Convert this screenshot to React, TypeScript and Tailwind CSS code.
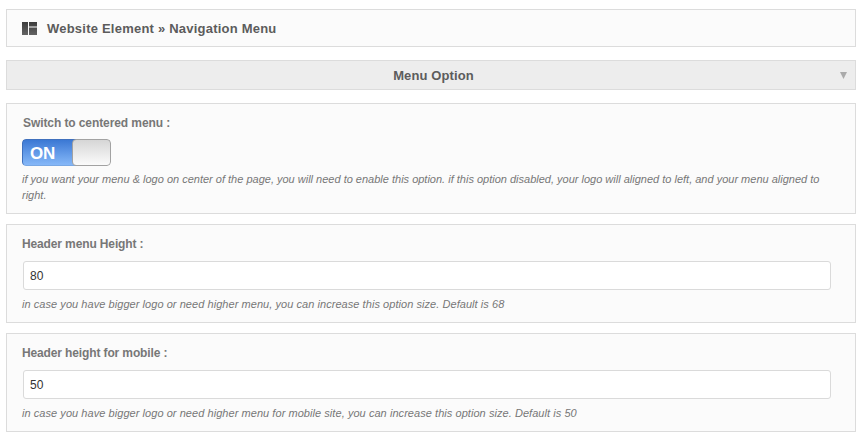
function Field({ label, value, hint }: { label: string; value: string; hint: string }) {
  return (
    <section className="mb-[10px] h-[99px] border border-[#dcdcdc] bg-[#fbfbfb] pl-[15px] pt-[11px]">
      <label className="block h-4 whitespace-nowrap text-[12px] font-bold leading-4 tracking-[-0.13px] text-[#777]">{label}</label>
      <input
        defaultValue={value}
        className="ml-px mt-[9px] block h-[29px] w-[808px] rounded-[3px] border border-[#dadada] bg-white px-[6px] text-[12px] text-[#333] outline-none"
      />
      <p className="mt-[6px] whitespace-nowrap text-[11px] italic leading-4 tracking-[0.055px] text-[#777]">{hint}</p>
    </section>
  );
}

export default function App() {
  return (
    <main className="h-[441px] w-[862px] overflow-hidden bg-white pl-[6px] pr-[6px] pt-[9px] font-['Liberation_Sans',Arial,sans-serif]">
      <header className="flex h-[38px] items-center border border-[#dcdcdc] bg-[#fbfbfb] pl-[15px]">
        <svg width="15" height="13" viewBox="0 0 15 13" className="mr-[10px] shrink-0">
          <defs>
            <linearGradient id="tile" x1="0" y1="0" x2="0" y2="1">
              <stop offset="0" stopColor="#3c3c3c" />
              <stop offset="1" stopColor="#646464" />
            </linearGradient>
          </defs>
          <path d="M0 0h6v13H0zM7 0h8v4.5H7zM7 5.5h8V13H7z" fill="url(#tile)" />
        </svg>
        <h1 className="whitespace-nowrap pt-[2px] text-[13px] font-bold tracking-[0.22px] text-[#5c5c5c]">Website Element » Navigation Menu</h1>
      </header>

      <div className="mt-[13px] flex h-[30px] items-center border border-[#dcdcdc] bg-[#ededed] pl-[20px] pr-[8px]">
        <h2 className="flex-1 pt-[2px] text-center text-[13px] font-bold tracking-[0.12px] text-[#5c5c5c]">Menu Option</h2>
        <svg width="7" height="7" viewBox="0 0 7 7">
          <path d="M0 0h7L3.5 7z" fill="#aaa" />
        </svg>
      </div>

      <section className="mb-[10px] mt-[13px] h-[111px] border border-[#dcdcdc] bg-[#fbfbfb] pl-[15px] pt-[11px]">
        <label className="block h-4 whitespace-nowrap pl-px text-[12px] font-bold leading-4 tracking-[-0.09px] text-[#777]">Switch to centered menu :</label>
        <button className="mt-[8px] flex h-[27px] w-[89px] overflow-hidden rounded-[4px]">
          <span className="flex h-full w-[54px] shrink-0 items-center rounded-l-[4px] border border-r-0 border-[#3f70bd] border-b-[#79a8e4] bg-linear-to-b from-[#3b78d4] to-[#86b8f8] pl-[7px] pt-[2px] text-[17px] font-bold leading-none tracking-[-0.3px] text-white">
            ON
          </span>
          <span className="-ml-[4px] h-full w-[39px] shrink-0 rounded-[4px] border border-[#a2a2a2] bg-linear-to-b from-[#d6d6d6] to-[#fbfbfb]" />
        </button>
        <p className="mt-[5px] whitespace-nowrap text-[11px] italic leading-4 text-[#777]">
          <span>if you want your menu &amp; logo on center of the page, you will need to enable this option. if this option disabled, your logo will aligned to left, and your menu aligned to</span>
          <br />
          right.
        </p>
      </section>

      <Field
        label="Header menu Height :"
        value="80"
        hint="in case you have bigger logo or need higher menu, you can increase this option size. Default is 68"
      />
      <Field
        label="Header height for mobile :"
        value="50"
        hint="in case you have bigger logo or need higher menu for mobile site, you can increase this option size. Default is 50"
      />
    </main>
  );
}
